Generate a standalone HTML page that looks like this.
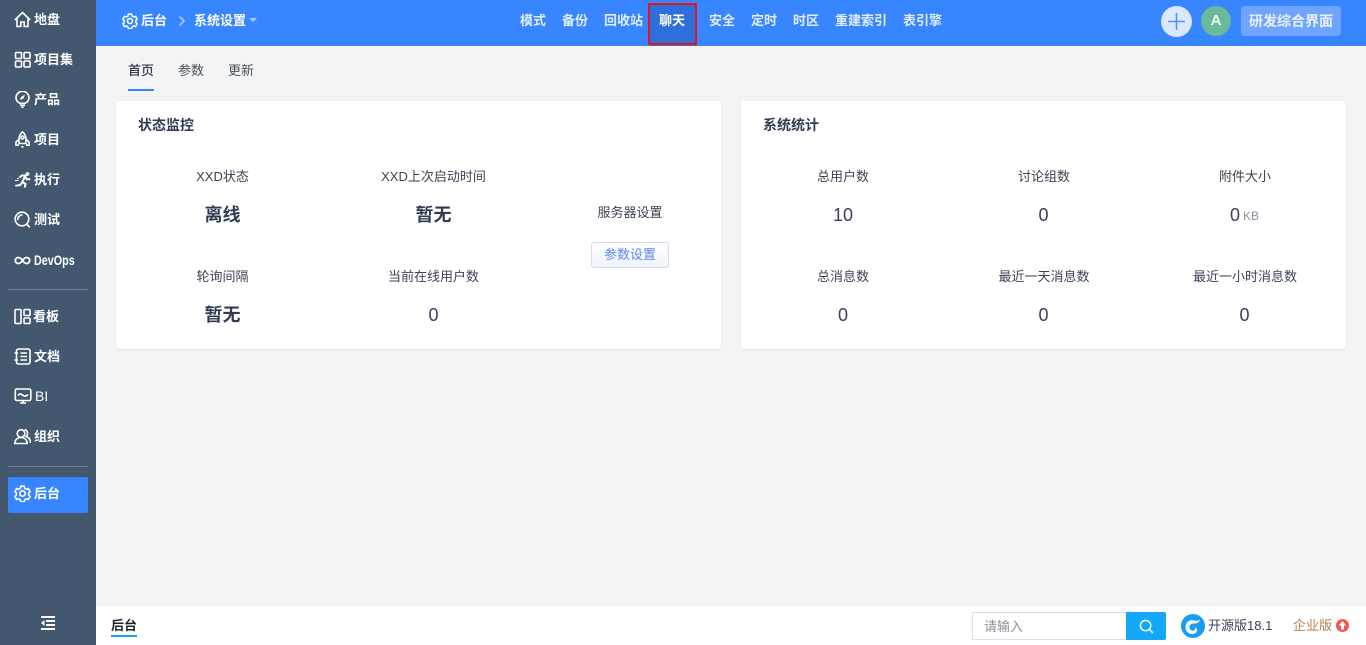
<!DOCTYPE html>
<html lang="zh"><head><meta charset="utf-8"><title>后台</title>
<style>
*{box-sizing:border-box}
html,body{margin:0;padding:0;width:1366px;height:645px;overflow:hidden;background:#f3f4f6;font-family:"Liberation Sans","Noto Sans CJK SC",sans-serif;font-size:13px;color:#313c52}
.a{position:absolute;white-space:nowrap}
.c{transform:translateX(-50%)}
#side{position:absolute;left:0;top:0;width:96px;height:645px;background:#43586f}
#top{position:absolute;left:96px;top:0;width:1270px;height:46px;background:#3785ff}
.si{position:absolute;left:0;width:96px;height:36px;color:#fff;font-weight:700;font-size:13px;line-height:36px}
.si span{position:absolute;left:34px;top:0}
.si svg{position:absolute;left:14px;top:9px;width:17px;height:17px;fill:none;stroke:#fff;stroke-width:1.6}
.n{top:13px;color:#fff;opacity:.86;font-weight:700;font-size:13px;line-height:16px}
.card{position:absolute;top:101px;height:248px;background:#fff;border-radius:4px;box-shadow:0 1px 2px rgba(0,0,0,.08)}
.l{font-size:13px;line-height:16px;color:#3c4353}
.v{font-size:18px;line-height:20px;color:#3a3f5c}
.b{font-size:18px;font-weight:700;line-height:20px;color:#313c52}
</style></head><body>
<div id="side">
<div class="si" style="top:2px"><svg viewBox="0 0 17 17"><path d="M.8 9 8.500 1.500 16.200 9M3 7.500V15.500h3.800v-4.500h3.400v4.500H14V7.500"/></svg><span>地盘</span></div>
<div class="si" style="top:42px"><svg viewBox="0 0 17 17"><rect x="1.500" y="1.500" width="6" height="6" rx="1"/><rect x="10" y="1.500" width="6" height="6" rx="1"/><rect x="1.500" y="10" width="6" height="6" rx="1"/><rect x="10" y="10" width="6" height="6" rx="1"/></svg><span>项目集</span></div>
<div class="si" style="top:82px"><svg viewBox="0 0 17 17"><path d="M5.800 12.300C3.300 11 2 9 2 6.800a6.500 6.500 0 0 1 13 0C15 9 13.700 11 11.200 12.300zM6 14.300h5M7.300 16.300h2.400"/><path d="M6 9l1-3 4-2.500L9.500 7.500z" fill="#fff" stroke="none"/></svg><span>产品</span></div>
<div class="si" style="top:122px"><svg viewBox="0 0 17 17"><path d="M8.500.8C6 3 5 5.500 5 8.300v4.200h7V8.300C12 5.500 11 3 8.500.8zM5 8.200 2 11v3.200h3M12 8.200l3 2.800v3.200h-3"/><circle cx="8.500" cy="6.500" r="1.500"/><path d="M7.500 15h2v1.800h-2z" fill="#fff" stroke="none"/></svg><span>项目</span></div>
<div class="si" style="top:162px"><svg viewBox="0 0 17 17"><circle cx="13.500" cy="3" r="1.900" fill="#fff" stroke="none"/><path d="M5.500 6.500 8 4.500h3.500L8.300 11l3.200 2-.7 3.500M11.500 6l1.300 2.200h3.400M8.300 11l-2 3-5 .8" stroke-width="2"/><path d="M1 9.500h3.500M3 7.500h2" stroke-width="1"/></svg><span>执行</span></div>
<div class="si" style="top:202px"><svg viewBox="0 0 17 17" stroke-width="1.800"><circle cx="8" cy="8" r="6.800"/><path d="M12.500 13 15.800 16.300M3.800 9A4.500 4.500 0 0 1 8.500 4" stroke-width="1.600"/></svg><span>测试</span></div>
<div class="si" style="top:243px"><svg viewBox="0 0 17 17"><path d="M8.500 8.500C7 6.300 5.800 5.500 4.300 5.500a3 3 0 0 0 0 6c1.500 0 2.700-.8 4.200-3S11.200 5.500 12.700 5.500a3 3 0 0 1 0 6c-1.500 0-2.700-.8-4.200-3z" stroke-width="1.800"/></svg><span style="font-size:14px;transform:scaleX(.77);transform-origin:left;left:34px;top:-1px">DevOps</span></div>
<div class="a" style="left:8px;top:289px;width:80px;height:1px;background:#71808f"></div>
<div class="si" style="top:299px"><svg viewBox="0 0 17 17"><rect x="1" y="1.500" width="6" height="14" rx="1"/><rect x="10" y="1.500" width="6" height="6" rx="1"/><rect x="10" y="10" width="6" height="5.500" rx="1"/></svg><span style="left:33px">看板</span></div>
<div class="si" style="top:339px"><svg viewBox="0 0 17 17"><rect x="2.500" y="1" width="13.500" height="15" rx="2"/><path d="M6.500 5h6.500M6.500 8.500h6.500M6.500 12h6.500M.5 5h3.500M.5 12h3.500"/></svg><span>文档</span></div>
<div class="si" style="top:378px"><svg viewBox="0 0 17 17" style="width:18px;top:10px"><rect x=".8" y="1" width="15.500" height="11.500" rx="1.500"/><path d="M3.500 7.500C5 5.500 6.500 5.500 8 7s3.500 1.500 5.500-.5M5.500 15h6M8.500 12.500V15"/></svg><span style="left:35px;font-weight:400;font-size:14px">BI</span></div>
<div class="si" style="top:419px"><svg viewBox="0 0 17 17"><circle cx="7" cy="5.500" r="3.800"/><path d="M.8 15.500c0-3.500 2.500-6 6.200-6s6.200 2.500 6.200 6zM10.500 1.500a4 4 0 0 1 1.500 7c2.800.7 4.500 3 4.500 6.500"/></svg><span>组织</span></div>
<div class="a" style="left:8px;top:466px;width:80px;height:1px;background:#71808f"></div>
<div class="a" style="left:8px;top:477px;width:80px;height:36px;background:#3785ff;border-radius:2px"></div>
<div class="si" style="top:476px"><svg viewBox="0 0 17 17"><path d="M6.800 1.200h3.400l.5 2 1.700 1 2-.6 1.700 3-1.500 1.400v2l1.500 1.400-1.700 3-2-.6-1.700 1-.5 2H6.800l-.5-2-1.700-1-2 .6-1.700-3 1.500-1.400v-2L.9 6.600l1.700-3 2 .6 1.700-1z"/><circle cx="8.500" cy="8.500" r="2.700"/></svg><span>后台</span></div>
<svg class="a" style="left:40px;top:615px" width="16" height="16" viewBox="0 0 16 16" fill="none" stroke="#fff" stroke-width="2"><path d="M1 2h14M6 6h9M6 10h9M1 14h14"/><path d="M4.500 5v6L1 8z" fill="#fff" stroke="none"/></svg>
</div>

<div id="top"></div>
<svg class="a" style="left:122px;top:13px" width="16" height="16" viewBox="0 0 17 17" fill="none" stroke="#fff" stroke-width="1.600"><path d="M6.800 1.200h3.400l.5 2 1.700 1 2-.6 1.700 3-1.500 1.400v2l1.500 1.400-1.700 3-2-.6-1.700 1-.5 2H6.800l-.5-2-1.700-1-2 .6-1.700-3 1.500-1.400v-2L.9 6.600l1.700-3 2 .6 1.700-1z"/><circle cx="8.500" cy="8.500" r="2.700"/></svg>
<div class="a" style="left:141px;top:13px;color:#fff;font-weight:700;line-height:16px">后台</div>
<svg class="a" style="left:178px;top:15px" width="8" height="12" viewBox="0 0 8 12" fill="none" stroke="#a9c9ff" stroke-width="1.600"><path d="M1.500 1.500 6 6l-4.500 4.500"/></svg>
<div class="a" style="left:194px;top:13px;color:#fff;font-weight:700;line-height:16px">系统设置</div>
<div class="a" style="left:249px;top:18px;width:0;height:0;border:4px solid transparent;border-top:4px solid #a9c9ff"></div>

<div class="a" style="left:650px;top:5px;width:46px;height:41px;background:#2f6fdb"></div>
<div class="a n" style="left:520px">模式</div>
<div class="a n" style="left:562px">备份</div>
<div class="a n" style="left:604px">回收站</div>
<div class="a n" style="left:659px;opacity:1">聊天</div>
<div class="a n" style="left:709px">安全</div>
<div class="a n" style="left:751px">定时</div>
<div class="a n" style="left:793px">时区</div>
<div class="a n" style="left:835px">重建索引</div>
<div class="a n" style="left:903px">表引擎</div>
<div class="a" style="left:648px;top:3px;width:49px;height:42px;border:2px solid #e8141c"></div>

<div class="a" style="left:1161px;top:6px;width:31px;height:31px;border-radius:50%;background:#dbe8ff"></div>
<svg class="a" style="left:1167px;top:12px" width="19" height="19" viewBox="0 0 19 19" stroke="#5c94ea" stroke-width="1.600"><path d="M9.500 1v17M1 9.500h17"/></svg>
<div class="a" style="left:1201px;top:6px;width:30px;height:30px;border-radius:50%;background:#6bb89b;color:#f0f7f4;font-weight:700;font-size:15px;line-height:30px;text-align:center">A</div>
<div class="a" style="left:1241px;top:6px;width:100px;height:30px;border-radius:4px;background:#6fa5ff;color:#eaf1ff;font-weight:700;font-size:14px;line-height:30px;text-align:center">研发综合界面</div>

<div class="a" style="left:128px;top:63px;line-height:16px;color:#313c52;font-weight:500">首页</div>
<div class="a" style="left:128px;top:89px;width:26px;height:2px;background:#3785ff"></div>
<div class="a" style="left:178px;top:63px;line-height:16px;color:#4a5160">参数</div>
<div class="a" style="left:228px;top:63px;line-height:16px;color:#4a5160">更新</div>

<div class="card" style="left:116px;width:605px"></div>
<div class="card" style="left:741px;width:605px"></div>
<div class="a" style="left:138px;top:117px;font-weight:700;font-size:14px;line-height:16px;color:#313c52">状态监控</div>
<div class="a" style="left:763px;top:117px;font-weight:700;font-size:14px;line-height:16px;color:#313c52">系统统计</div>

<div class="a c l" style="left:222.500px;top:169px">XXD状态</div>
<div class="a c l" style="left:433.500px;top:169px">XXD上次启动时间</div>
<div class="a c b" style="left:222.500px;top:205px">离线</div>
<div class="a c b" style="left:433.500px;top:205px">暂无</div>
<div class="a c l" style="left:222.500px;top:269px">轮询间隔</div>
<div class="a c l" style="left:433.500px;top:269px">当前在线用户数</div>
<div class="a c b" style="left:222.500px;top:305px">暂无</div>
<div class="a c v" style="left:433.500px;top:305px">0</div>
<div class="a c l" style="left:630px;top:205px">服务器设置</div>
<div class="a" style="left:591px;top:242px;width:78px;height:26px;border:1px solid #d5dbe6;border-radius:3px;background:linear-gradient(#fff,#eef4ff);color:#5c88e8;line-height:24px;text-align:center">参数设置</div>

<div class="a c l" style="left:843px;top:169px">总用户数</div>
<div class="a c l" style="left:1044px;top:169px">讨论组数</div>
<div class="a c l" style="left:1245px;top:169px">附件大小</div>
<div class="a c v" style="left:843px;top:205px">10</div>
<div class="a c v" style="left:1043.500px;top:205px">0</div>
<div class="a v" style="left:1230px;top:205px">0</div>
<div class="a" style="left:1243px;top:208px;font-size:12px;line-height:16px;color:#8b92a3">KB</div>
<div class="a c l" style="left:843px;top:269px">总消息数</div>
<div class="a c l" style="left:1044px;top:269px">最近一天消息数</div>
<div class="a c l" style="left:1245px;top:269px">最近一小时消息数</div>
<div class="a c v" style="left:843px;top:305px">0</div>
<div class="a c v" style="left:1043.500px;top:305px">0</div>
<div class="a c v" style="left:1244.500px;top:305px">0</div>

<div class="a" style="left:96px;top:605px;width:1270px;height:40px;background:#fff;border-top:1px solid #eceef1"></div>
<div class="a" style="left:111px;top:618px;font-weight:700;line-height:16px;color:#1e2430">后台</div>
<div class="a" style="left:111px;top:635px;width:26px;height:2px;background:#16a8f8"></div>
<div class="a" style="left:972px;top:612px;width:155px;height:28px;border:1px solid #dcdfe4;border-right:0;color:#8a8f99;line-height:27px;padding-left:11px">请输入</div>
<div class="a" style="left:1126px;top:612px;width:40px;height:28px;background:#16a8f8;border-radius:0 2px 2px 0"></div>
<svg class="a" style="left:1139px;top:619px" width="15" height="15" viewBox="0 0 16 16" fill="none" stroke="#fff" stroke-width="1.500"><circle cx="7" cy="7" r="5.500"/><path d="m11 11 3.800 3.800"/></svg>
<svg class="a" style="left:1181px;top:614px" width="24" height="24" viewBox="0 0 24 24"><circle cx="12" cy="12" r="12" fill="#1a9cf0"/><path d="M4.500 13C4.500 8 8.500 5 14 6.500c2 .5 3.500 0 5-1-.5 2.500-2.500 4.200-5.500 4-2.500-.2-5 1-5 3.500S11 17 12.500 16.500s2-2 1-3c1.800 0 3 1.500 2.500 3.500-.7 2.500-3.500 3.500-6 3-3.500-.7-5.500-3.500-5.500-7z" fill="#fff" fill-opacity=".92"/></svg>
<div class="a" style="left:1208px;top:618px;line-height:16px;color:#3c4353">开源版18.1</div>
<div class="a" style="left:1293px;top:618px;line-height:16px;color:#b5804f">企业版</div>
<svg class="a" style="left:1336px;top:619px" width="13" height="13" viewBox="0 0 12 12"><circle cx="6" cy="6" r="6" fill="#f4574f"/><path d="M6 2 9.500 6H7.400v3.800H4.600V6H2.500z" fill="#fff"/></svg>
</body></html>
